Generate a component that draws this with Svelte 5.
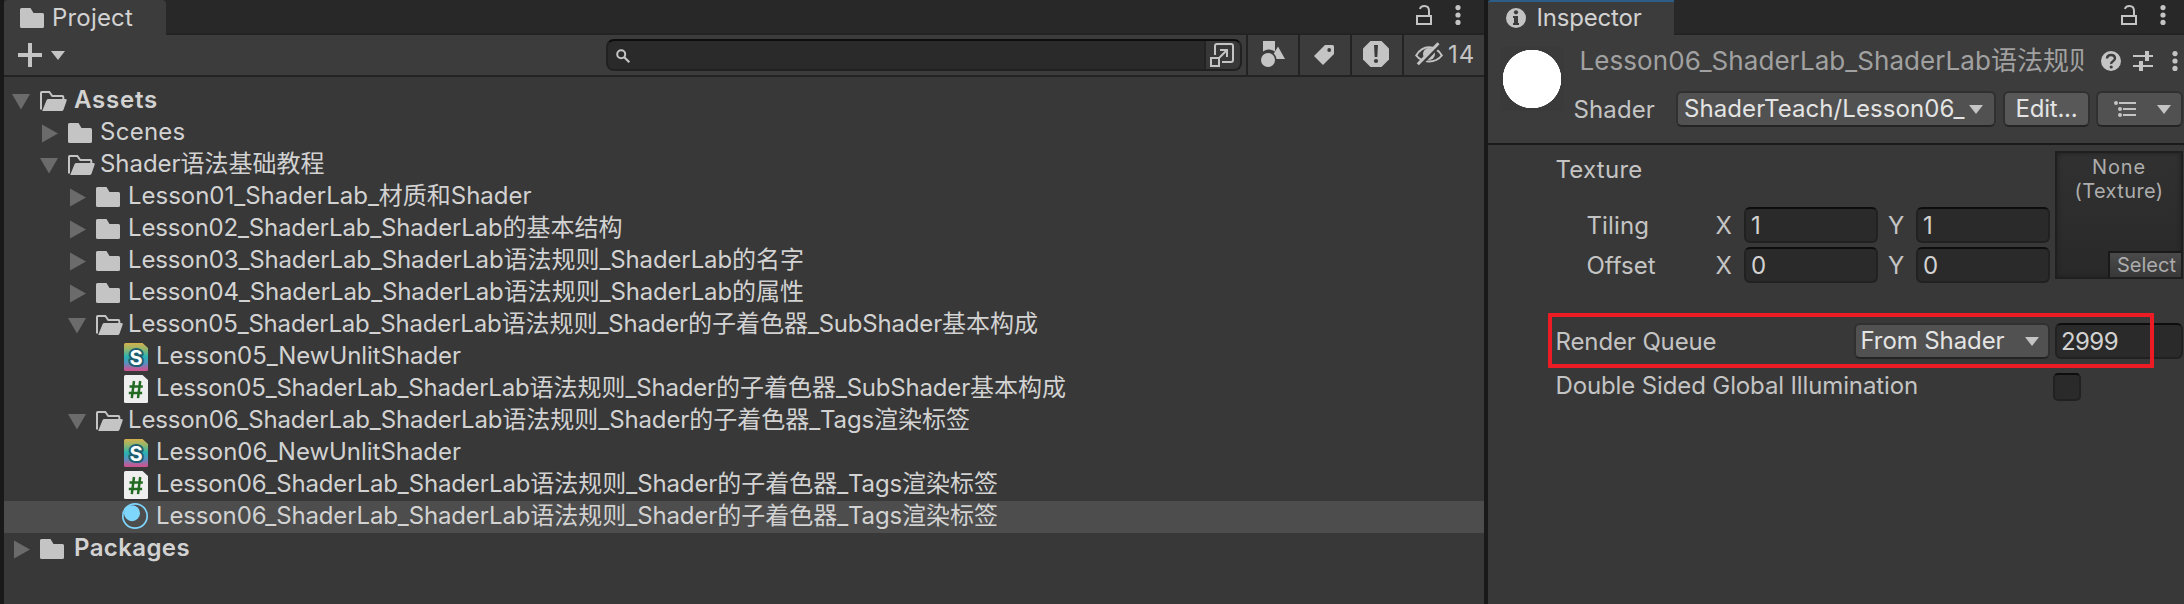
<script>
  const rows = [
    { level: 0, icon: 'open', fold: 'down', name: 'Assets', width: 84, bold: true },
    { level: 1, icon: 'closed', fold: 'right', name: 'Scenes', width: 85.5 },
    { level: 1, icon: 'open', fold: 'down', name: 'Shader语法基础教程', width: 224.5 },
    { level: 2, icon: 'closed', fold: 'right', name: 'Lesson01_ShaderLab_材质和Shader', width: 403.5 },
    { level: 2, icon: 'closed', fold: 'right', name: 'Lesson02_ShaderLab_ShaderLab的基本结构', width: 494.5 },
    { level: 2, icon: 'closed', fold: 'right', name: 'Lesson03_ShaderLab_ShaderLab语法规则_ShaderLab的名字', width: 676 },
    { level: 2, icon: 'closed', fold: 'right', name: 'Lesson04_ShaderLab_ShaderLab语法规则_ShaderLab的属性', width: 676 },
    { level: 2, icon: 'open', fold: 'down', name: 'Lesson05_ShaderLab_ShaderLab语法规则_Shader的子着色器_SubShader基本构成', width: 910 },
    { level: 3, icon: 'shader', name: 'Lesson05_NewUnlitShader', width: 305 },
    { level: 3, icon: 'script', name: 'Lesson05_ShaderLab_ShaderLab语法规则_Shader的子着色器_SubShader基本构成', width: 910 },
    { level: 2, icon: 'open', fold: 'down', name: 'Lesson06_ShaderLab_ShaderLab语法规则_Shader的子着色器_Tags渲染标签', width: 842 },
    { level: 3, icon: 'shader', name: 'Lesson06_NewUnlitShader', width: 305 },
    { level: 3, icon: 'script', name: 'Lesson06_ShaderLab_ShaderLab语法规则_Shader的子着色器_Tags渲染标签', width: 842 },
    { level: 3, icon: 'material', name: 'Lesson06_ShaderLab_ShaderLab语法规则_Shader的子着色器_Tags渲染标签', width: 842, selected: true },
    { level: 0, icon: 'closed', fold: 'right', name: 'Packages', width: 116, bold: true }
  ];

  const vectors = [
    { name: 'Tiling', nameWidth: 62.5, value: '1' },
    { name: 'Offset', nameWidth: 69, value: '0' }
  ];

  // Latin and CJK runs are spaced separately: only Latin runs are tracked.
  const runs = (text) => text.match(/[\x20-\x7e]+|[^\x20-\x7e]+/g);
  const isLatin = (run) => /^[\x20-\x7e]/.test(run);

  function fit(node, width) {
    if (!width) return;
    node.style.setProperty('--track', '0px');
    const natural = node.getBoundingClientRect().width;
    const count = node.textContent.replace(/[^\x20-\x7e]/g, '').length;
    node.style.setProperty('--track', `${(width - natural) / count}px`);
  }
</script>

{#snippet label(text, width)}<span class="label" use:fit={width}>{#each runs(text) as run}<span class:latin={isLatin(run)}>{run}</span>{/each}</span>{/snippet}

{#snippet closedFolder()}
  <svg class="ico" width="28" height="20" viewBox="0 0 28 20"><path d="M1.5 0H10.5L13.5 5H22.5Q24 5 24 6.5V18.5Q24 20 22.5 20H1.5Q0 20 0 18.5V1.5Q0 0 1.5 0Z" fill="#c4c4c4" /></svg>
{/snippet}

{#snippet lock()}
  <svg class="ico" width="16" height="20" viewBox="0 0 16 20"><rect x="1" y="11" width="14" height="8" fill="none" stroke="#c4c4c4" stroke-width="2" /><path d="M4 4Q4.5 1 8.5 1Q13 1 13 6V11" fill="none" stroke="#c4c4c4" stroke-width="2" /></svg>
{/snippet}

{#snippet dots()}
  <svg class="ico" width="6" height="20" viewBox="0 0 6 20"><g fill="#c4c4c4"><circle cx="3" cy="2.6" r="2.6" /><circle cx="3" cy="10" r="2.6" /><circle cx="3" cy="17.4" r="2.6" /></g></svg>
{/snippet}

{#snippet caret()}
  <svg class="ico" width="14" height="9" viewBox="0 0 14 9"><path d="M0 0H14L7 9Z" fill="#c4c4c4" /></svg>
{/snippet}

<div class="editor">
  <section class="project">
    <header class="tabs">
      <div class="tab project-tab">{@render closedFolder()}{@render label('Project', 81)}</div>
      <div class="tab-actions">{@render lock()}{@render dots()}</div>
    </header>

    <div class="toolbar">
      <div class="create">
        <svg class="ico" width="24" height="24" viewBox="0 0 24 24"><path d="M10 0h4v10h10v4H14v10h-4V14H0v-4h10z" fill="#c4c4c4" /></svg>
        {@render caret()}
      </div>
      <div class="search">
        <div class="query">
          <svg class="ico" width="15" height="15" viewBox="0 0 15 15"><circle cx="5.2" cy="5.2" r="4" fill="none" stroke="#c4c4c4" stroke-width="2" /><path d="M8.3 8.3L13.3 13.3" stroke="#c4c4c4" stroke-width="2.2" /></svg>
        </div>
        <div class="popout">
          <svg class="ico" width="24" height="24" viewBox="0 0 24 24"><g fill="none" stroke="#c4c4c4" stroke-width="2"><path d="M5 12V3Q5 1 7 1H21Q23 1 23 3V17Q23 19 21 19H12" /><rect x="1" y="15" width="8" height="8" /><path d="M9.5 14.5L17 7M10 7H17V14" /></g></svg>
        </div>
      </div>
      <button class="types">
        <svg class="ico" width="24" height="26" viewBox="0 0 24 26"><path d="M2 0H14V10.5Q10.500 8 7 8.500Q4 9 2 10.500Z" fill="#c4c4c4" /><circle cx="7" cy="19" r="7" fill="#c4c4c4" /><path d="M17 5.500L24 18H15.500Q15 14.500 12.800 12.500Z" fill="#c4c4c4" /></svg>
      </button>
      <button class="labels">
        <svg class="ico" width="20" height="20" viewBox="0 0 20 20"><path d="M11 0H18.500Q20 0 20 1.500V9L9 20L0 11Z" fill="#c4c4c4" /><circle cx="15.200" cy="5" r="1.900" fill="#3c3c3c" /></svg>
      </button>
      <button>
        <svg class="ico" width="26" height="26" viewBox="0 0 26 26"><path d="M7.500 0H18.500L26 7.500V18.500L18.500 26H7.500L0 18.500V7.500Z" fill="#c4c4c4" /><path d="M11 4H15L14.300 16H11.700Z" fill="#3c3c3c" /><circle cx="13" cy="20" r="2.100" fill="#3c3c3c" /></svg>
      </button>
      <button class="hidden-count">
        <svg class="ico" width="28" height="24" viewBox="0 0 28 24"><path d="M1.200 13.500Q6 5.300 14 5.300T26.800 13.500Q22 19.500 14 19.500T1.200 13.500Z" fill="none" stroke="#c4c4c4" stroke-width="2" /><circle cx="14" cy="12" r="6" fill="#c4c4c4" /><path d="M4.800 23.800L25.800 2.500" stroke="#3c3c3c" stroke-width="3" /><path d="M2.800 22.300L23.500 1.200" stroke="#c4c4c4" stroke-width="3" /></svg>
        {@render label('14', 27)}
      </button>
    </div>

    <ul class="tree">
      {#each rows as row}
        <li class="row level{row.level}" class:selected={row.selected} class:bold={row.bold}>
          <svg class="fold" width="20" height="20" viewBox="0 0 20 20">
            {#if row.fold === 'down'}<path d="M0 3H18L9 18.500Z" fill="#6b6b6b" />{:else if row.fold === 'right'}<path d="M2 1.500L18 10.500L2 19.500Z" fill="#6b6b6b" />{/if}
          </svg>
          {#if row.icon === 'closed'}
            {@render closedFolder()}
          {:else if row.icon === 'open'}
            <svg class="ico" width="28" height="20" viewBox="0 0 28 20"><path d="M1 18.500V1.800Q1 1 1.800 1H9.300L12.300 5H22.300Q23.300 5 23.300 6V8.500" fill="none" stroke="#c4c4c4" stroke-width="2" /><path d="M8.500 8H25.500Q27.300 8 26.700 9.600L23.500 18.700Q23 20 21.500 20H2.200L6.500 9.300Q7 8 8.500 8Z" fill="#c4c4c4" /></svg>
          {:else if row.icon === 'shader'}
            <svg class="ico" width="28" height="28" viewBox="0 0 28 28">
              <defs><linearGradient id="spectrum" x1="0" y1="0" x2="0" y2="1"><stop offset="0" stop-color="#d4b04c" /><stop offset=".22" stop-color="#92b56c" /><stop offset=".5" stop-color="#25b1b4" /><stop offset=".73" stop-color="#5b8fc0" /><stop offset=".9" stop-color="#b4609c" /><stop offset="1" stop-color="#d05092" /></linearGradient></defs>
              <path d="M1.500 0H18.500L24 5V26.500Q24 28 22.500 28H1.500Q0 28 0 26.500V1.500Q0 0 1.500 0Z" fill="url(#spectrum)" />
              <text x="12" y="22" text-anchor="middle" font-size="20" font-weight="700" fill="#fff" stroke="#1d5f70" stroke-width="4" stroke-linejoin="round" paint-order="stroke">S</text>
            </svg>
          {:else if row.icon === 'script'}
            <svg class="ico" width="28" height="28" viewBox="0 0 28 28"><path d="M1.500 0H18.500L24 5V26.500Q24 28 22.500 28H1.500Q0 28 0 26.500V1.500Q0 0 1.500 0Z" fill="#efefef" /><path d="M10 6L7.800 23.200M16.200 6L14 23.200M5.500 11.500H18.800M4.800 18H18.100" fill="none" stroke="#236b23" stroke-width="2.500" /></svg>
          {:else}
            <svg class="ico ball" width="30" height="26" viewBox="0 0 30 26"><circle cx="13" cy="13" r="12.200" fill="none" stroke="#7fd6fd" stroke-width="1.700" /><circle cx="10" cy="10.200" r="8" fill="#7fd6fd" /></svg>
          {/if}
          {@render label(row.name, row.width)}
        </li>
      {/each}
    </ul>
  </section>

  <section class="inspector">
    <header class="tabs">
      <div class="tab inspector-tab">
        <svg class="ico" width="20" height="20" viewBox="0 0 20 20"><circle cx="10" cy="10" r="10" fill="#c4c4c4" /><circle cx="10" cy="4.300" r="2.100" fill="#3c3c3c" /><path d="M7 8H12V15H13V17H7V15H8V10H7Z" fill="#3c3c3c" /></svg>
        {@render label('Inspector', 105)}
      </div>
      <div class="tab-actions">{@render lock()}{@render dots()}</div>
    </header>

    <div class="asset">
      <div class="preview"></div>
      <div class="details">
        <div class="title">
          <div class="asset-name">{@render label('Lesson06_ShaderLab_ShaderLab语法规则', 515.5)}</div>
          <div class="title-actions">
            <svg class="ico" width="20" height="20" viewBox="0 0 20 20"><circle cx="10" cy="10" r="10" fill="#c4c4c4" /><path d="M6 7.500Q6.200 4 10 4T14 7.200Q14 9 12 10.200T10.200 13" fill="none" stroke="#3c3c3c" stroke-width="2.400" /><circle cx="10.200" cy="16" r="1.600" fill="#3c3c3c" /></svg>
            <svg class="ico" width="20" height="20" viewBox="0 0 20 20"><path d="M0 5H12M16 5H20M0 15H6M10 15H20" stroke="#c4c4c4" stroke-width="2" /><path d="M14 0V10M8 10V20" stroke="#c4c4c4" stroke-width="4" /></svg>
            {@render dots()}
          </div>
        </div>
        <div class="shader-line">
          <div class="shader-label">{@render label('Shader', 81.5)}</div>
          <div class="control shader-pick">{@render label('ShaderTeach/Lesson06_', 280.5)}{@render caret()}</div>
          <div class="control edit">{@render label('Edit...', 62)}</div>
          <div class="control list">
            <svg class="ico" width="22" height="16" viewBox="0 0 22 16"><path d="M5 2H22M9 8H22M9 14H22" stroke="#c4c4c4" stroke-width="2" /><g fill="#c4c4c4"><circle cx="2" cy="2" r="2" /><circle cx="6" cy="8" r="2" /><circle cx="6" cy="14" r="2" /></g></svg>
            {@render caret()}
          </div>
        </div>
      </div>
    </div>

    <div class="properties">
      <div class="texture">
        <div class="texture-fields">
          <div class="texture-title">{@render label('Texture', 87)}</div>
          {#each vectors as v}
            <div class="vector">
              <span class="vector-name">{@render label(v.name, v.nameWidth)}</span>
              <span class="axis">X</span>
              <div class="input">{v.value}</div>
              <span class="axis y">Y</span>
              <div class="input">{v.value}</div>
            </div>
          {/each}
        </div>
        <div class="slot">
          <div>{@render label('None', 54)}</div>
          <div>{@render label('(Texture)', 89)}</div>
          <div class="select">{@render label('Select', 59)}</div>
        </div>
      </div>

      <div class="queue">
        <div class="queue-name">{@render label('Render Queue', 161)}</div>
        <div class="control queue-pick">{@render label('From Shader', 144)}{@render caret()}</div>
        <div class="input queue-value">{@render label('2999', 57)}</div>
        <div class="highlight"></div>
      </div>

      <div class="gi">
        <div class="gi-name">{@render label('Double Sided Global Illumination', 362.5)}</div>
        <div class="checkbox"></div>
      </div>
    </div>
  </section>
</div>

<style>
  :global(body) {
    margin: 0;
    background: #1a1a1a;
  }
  .editor {
    display: flex;
    gap: 4px;
    box-sizing: border-box;
    width: 2184px;
    height: 604px;
    padding-left: 4px;
    overflow: hidden;
    background: #191919;
    color: #d2d2d2;
    font: 24px/30px Inter, 'Noto Sans CJK SC', sans-serif;
  }
  .editor * {
    box-sizing: border-box;
  }
  .label {
    display: inline-block;
    white-space: pre;
  }
  .latin {
    letter-spacing: var(--track, 0);
  }
  .ico,
  .fold {
    display: block;
    flex: none;
    overflow: visible;
  }
  .project {
    width: 1480px;
    background: #383838;
  }
  .inspector {
    width: 696px;
    background: #383838;
  }
  .tabs {
    display: flex;
    justify-content: space-between;
    height: 35px;
    background: linear-gradient(#282828 33px, #232323 33px);
  }
  .tab {
    display: flex;
    align-items: center;
    height: 35px;
    background: #3c3c3c;
  }
  .project-tab {
    width: 162px;
    padding-left: 16px;
    gap: 4px;
    border-radius: 4px 4px 0 0;
  }
  .inspector-tab {
    width: 186px;
    padding: 0 0 2px 18px;
    gap: 10.5px;
    border-top: 2px solid #2c5d87;
    border-radius: 3px 0 0 0;
  }
  .tab-actions {
    display: flex;
    gap: 23px;
    padding: 5px 23px 0 0;
  }
  .inspector .tab-actions {
    padding-right: 18px;
  }
  .toolbar {
    display: flex;
    height: 42px;
    background: #3c3c3c;
    border-bottom: 2px solid #232323;
  }
  .create {
    display: flex;
    align-items: center;
    gap: 9px;
    width: 602px;
    padding-left: 14px;
  }
  .search {
    display: flex;
    width: 636px;
    height: 32px;
    margin: 4px 4px 0 0;
    border: 2px solid #212121;
    border-top-color: #0d0d0d;
    border-radius: 8px;
    background: #2a2a2a;
  }
  .query {
    flex: 1;
    padding: 8px 0 0 8px;
  }
  .popout {
    width: 36px;
    padding: 2px 0 0 4px;
    background: #383838;
    border-radius: 0 6px 6px 0;
    border-left: 2px solid #232323;
  }
  .toolbar button {
    display: flex;
    align-items: center;
    justify-content: center;
    width: 52px;
    margin: 0;
    padding: 0 2px 2px 0;
    border: 0;
    border-left: 2px solid #232323;
    background: none;
    color: #c4c4c4;
    font: inherit;
  }
  .toolbar .types {
    padding-right: 0;
  }
  .toolbar .labels {
    padding: 0 3px 0 0;
  }
  .toolbar .hidden-count {
    width: 82px;
    justify-content: flex-start;
    padding: 0 0 2px 11px;
    gap: 5px;
  }
  .hidden-count .label {
    margin-top: 2px;
  }
  .tree {
    margin: 0;
    padding: 8px 0 0;
    list-style: none;
  }
  .row {
    display: flex;
    align-items: center;
    height: 32px;
    padding-left: 8px;
  }
  .row .fold {
    margin-right: 8px;
  }
  .row .label {
    margin: -2px 0 0 4px;
  }
  .level1 {
    padding-left: 36px;
  }
  .level2 {
    padding-left: 64px;
  }
  .level3 {
    padding-left: 92px;
  }
  .row.bold {
    font-weight: 600;
  }
  .row.bold .label {
    margin-left: 6px;
  }
  .ball {
    margin: -2px 0 0 -2px;
  }
  .selected {
    background: #4d4d4d;
  }
  .asset {
    display: flex;
    height: 110px;
    padding: 12px 0 0 12px;
    background: #3c3c3c;
    border-bottom: 2px solid #1a1a1a;
  }
  .preview {
    width: 64px;
    height: 64px;
    background: radial-gradient(circle, #fff 29px, #3a3a3a 29.500px);
  }
  .details {
    padding-left: 9.500px;
  }
  .title {
    display: flex;
    padding-left: 6px;
    height: 44px;
  }
  .asset-name {
    width: 504px;
    overflow: hidden;
    color: #a1a1a1;
    font-size: 26px;
    line-height: 28px;
    white-space: nowrap;
  }
  .title-actions {
    display: flex;
    gap: 12px;
    padding: 4px 0 0 17.500px;
  }
  .title-actions .ico:last-child {
    margin-left: 7px;
  }
  .shader-line {
    display: flex;
  }
  .shader-label {
    width: 102.500px;
    padding-top: 4px;
    color: #c4c4c4;
  }
  .control {
    display: flex;
    align-items: center;
    height: 36px;
    border: 2px solid #303030;
    border-bottom-color: #242424;
    border-radius: 6px;
    background: #515151;
    color: #e4e4e4;
  }
  .shader-pick {
    width: 320px;
    padding: 0 11px 0 6px;
    justify-content: space-between;
  }
  .edit {
    width: 87px;
    margin: 0 6px 0 7px;
    justify-content: center;
    background: #585858;
  }
  .list {
    width: 87px;
    padding: 0 10px 0 16px;
    justify-content: space-between;
  }
  .properties {
    color: #c4c4c4;
  }
  .texture {
    display: flex;
    height: 172px;
    padding-top: 6px;
  }
  .texture-fields {
    width: 567px;
    padding-left: 67.500px;
  }
  .texture-title {
    height: 56px;
    padding-top: 4px;
  }
  .vector {
    display: flex;
    height: 40px;
    margin-left: 31px;
    line-height: 38px;
  }
  .vector-name {
    width: 129px;
  }
  .axis {
    width: 28.500px;
  }
  .axis.y {
    width: 38px;
    padding-left: 10px;
  }
  .input {
    width: 134px;
    height: 36px;
    padding-left: 5px;
    border: 2px solid #212121;
    border-top-color: #0d0d0d;
    border-radius: 6px;
    background: #2a2a2a;
    color: #d2d2d2;
    line-height: 34px;
  }
  .slot {
    display: flex;
    flex-direction: column;
    align-items: center;
    width: 128px;
    height: 128px;
    padding-top: 2px;
    border: 2px solid #1f1f1f;
    background: linear-gradient(#313131, #292929);
    box-shadow: inset 0 0 5px #202020;
    color: #adadad;
    font-size: 20px;
    line-height: 24px;
  }
  .select {
    align-self: flex-end;
    width: 73px;
    height: 26px;
    margin-top: auto;
    padding-left: 7px;
    border: solid #191919;
    border-width: 2px 0 0 2px;
    background: linear-gradient(#4a4a4a, #383838);
  }
  .queue {
    position: relative;
    display: flex;
    height: 50px;
    padding: 6px 0 0 67.500px;
  }
  .queue-name {
    width: 298px;
    line-height: 38px;
  }
  .queue-pick {
    width: 196px;
    margin-right: 5.500px;
    padding: 0 9px 0 5px;
    justify-content: space-between;
  }
  .queue-value {
    width: 128px;
    padding-left: 4px;
  }
  .highlight {
    position: absolute;
    left: 60px;
    top: -4px;
    width: 606px;
    height: 55px;
    border: 4px solid #ed1c24;
    border-radius: 1px;
  }
  .gi {
    display: flex;
    padding: 4px 0 0 67.500px;
  }
  .gi-name {
    width: 497.500px;
  }
  .checkbox {
    width: 28px;
    height: 28px;
    margin-top: 2px;
    border: 2px solid #212121;
    border-top-color: #0d0d0d;
    border-radius: 5px;
    background: #2a2a2a;
  }
</style>
